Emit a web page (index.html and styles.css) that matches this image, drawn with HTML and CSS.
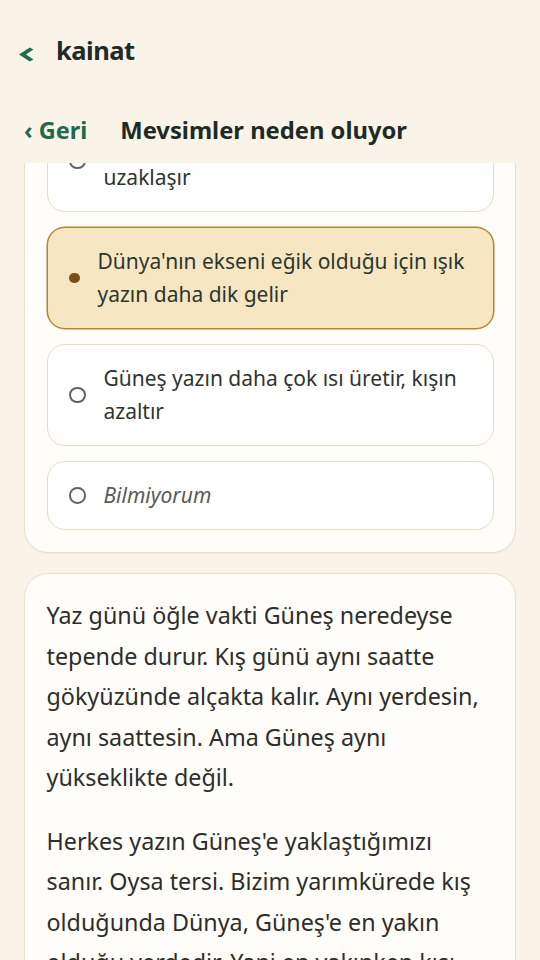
FILE: index.html
```html
<!DOCTYPE html>
<html lang="tr">
<head>
<meta charset="utf-8">
<meta name="viewport" content="width=device-width, initial-scale=1">
<title>kainat – Mevsimler neden oluyor</title>
<link rel="stylesheet" href="styles.css">
</head>
<body>
<div class="app">
  <header class="topbar">
    <svg class="back-icon" width="16" height="36" viewBox="0 0 16 36" aria-hidden="true">
      <polygon points="1,22.5 11.8,15.5 15.4,17.6 8,22.5 15.4,27.4 11.8,29.5" fill="#1f6d4e"/>
    </svg>
    <span class="app-title">kainat</span>
  </header>

  <nav class="subbar">
    <a class="back-link" href="#">‹ Geri</a>
    <h1 class="page-title">Mevsimler neden oluyor</h1>
  </nav>

  <main class="scroll" id="scroll">
    <section class="card quiz">
      <h2 class="question">Sence mevsimler neden oluşur?</h2>
      <div class="options">
        <div class="option" id="first-option">
          <span class="radio"></span>
          <span class="option-text">Dünya yazın Güneş'e yaklaşır, kışın uzaklaşır</span>
        </div>
        <div class="option selected">
          <span class="radio"></span>
          <span class="option-text">Dünya'nın ekseni eğik olduğu için ışık yazın daha dik gelir</span>
        </div>
        <div class="option">
          <span class="radio"></span>
          <span class="option-text">Güneş yazın daha çok ısı üretir, kışın azaltır</span>
        </div>
        <div class="option">
          <span class="radio"></span>
          <span class="option-text unsure">Bilmiyorum</span>
        </div>
      </div>
    </section>

    <section class="card reading">
      <p>Yaz günü öğle vakti Güneş neredeyse tepende durur. Kış günü aynı saatte gökyüzünde alçakta kalır. Aynı yerdesin, aynı saattesin. Ama Güneş aynı yükseklikte değil.</p>
      <p>Herkes yazın Güneş'e yaklaştığımızı sanır. Oysa tersi. Bizim yarımkürede kış olduğunda Dünya, Güneş'e en yakın olduğu yerdedir. Yani en yakınken kışı yaşarız.</p>
      <p>Asıl sebep Dünya'nın ekseninin eğik olmasıdır. Bu eğiklik yüzünden ışık yazın daha dik, kışın daha yatık gelir.</p>
    </section>
  </main>
</div>
<script src="script.js"></script>
</body>
</html>
```

FILE: styles.css
```css
* {
  box-sizing: border-box;
}

html,
body {
  margin: 0;
  padding: 0;
  height: 100%;
}

body {
  background: #faf3e8;
  font-family: "Noto Sans", "Open Sans", sans-serif;
  color: #2d2d2d;
  overflow: hidden;
}

.app {
  height: 100vh;
  display: flex;
  flex-direction: column;
}

/* top bar */
.topbar {
  display: flex;
  align-items: center;
  gap: 22px;
  padding: 32px 18px 45px;
  flex-shrink: 0;
}

.back-icon {
  display: block;
  flex-shrink: 0;
}

.app-title {
  font-size: 25.5px;
  line-height: 36px;
  font-weight: 700;
  color: #1f2c26;
  letter-spacing: -0.5px;
}

/* sub bar */
.subbar {
  display: flex;
  align-items: baseline;
  gap: 33px;
  padding: 0 24px 16.3px;
  flex-shrink: 0;
}

.back-link {
  font-size: 23.5px;
  line-height: 34px;
  font-weight: 700;
  color: #1e6b4c;
  text-decoration: none;
  white-space: nowrap;
}

.page-title {
  margin: 0;
  font-size: 23.75px;
  line-height: 34px;
  font-weight: 700;
  color: #1d2b25;
  white-space: nowrap;
}

/* scroll area */
.scroll {
  flex: 1;
  min-height: 0;
  overflow: hidden;
  padding: 0 24px 40px;
  display: flex;
  flex-direction: column;
  gap: 20px;
}

.card {
  flex-shrink: 0;
  background: #fffdf9;
  border: 1px solid #ecdfc7;
  border-radius: 24px;
  box-shadow: 0 1px 2px rgba(120, 90, 40, 0.05);
}

/* quiz */
.quiz {
  padding: 21.5px;
}

.question {
  margin: 0 0 18px;
  font-size: 22px;
  line-height: 32px;
  font-weight: 700;
  color: #1d2b25;
}

.options {
  display: flex;
  flex-direction: column;
  gap: 14.5px;
}

.option {
  display: flex;
  align-items: center;
  gap: 18px;
  padding: 17.25px 21.5px;
  background: #ffffff;
  border: 1px solid #eadcc2;
  border-radius: 18px;
}

.radio {
  flex-shrink: 0;
  width: 16.5px;
  height: 16.5px;
  border: 2px solid #626262;
  border-radius: 50%;
}

.option-text {
  font-size: 21px;
  line-height: 33px;
  color: #303431;
}

.option.selected {
  background: #f6e6c2;
  border-color: #b3852f;
  box-shadow: 0 0 0 0.5px #b3852f;
}

.option.selected .radio {
  width: 10.5px;
  height: 10.5px;
  border: none;
  background: #7a5018;
}

.option.selected .option-text {
  color: #2c362e;
}

.unsure {
  font-style: italic;
  color: #5a5a5a;
}

/* reading */
.reading {
  padding: 21.5px 32px 21.5px 21.5px;
}

.reading p {
  margin: 0 0 23px;
  font-size: 23.3px;
  line-height: 40.5px;
  color: #2d2e2d;
}

.reading p:last-child {
  margin-bottom: 0;
}
```

FILE: script.js
```js
(function () {
  var scroller = document.getElementById('scroll');
  var first = document.getElementById('first-option');
  if (!scroller || !first) return;
  var offset = first.getBoundingClientRect().top - scroller.getBoundingClientRect().top;
  scroller.scrollTop = offset + 53;
})();
```
